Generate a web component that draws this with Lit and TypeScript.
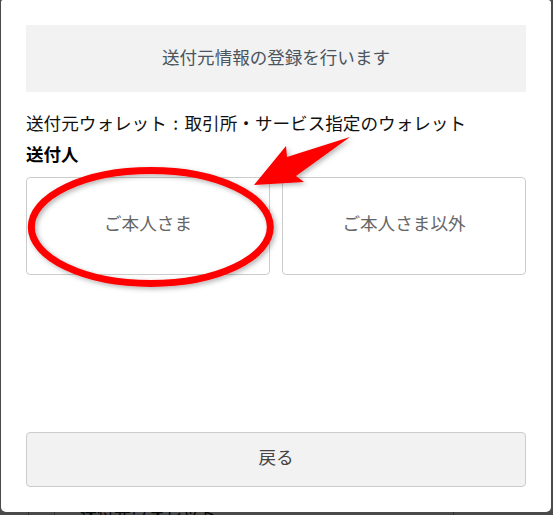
import { LitElement, html, css } from "lit";
import { customElement } from "lit/decorators.js";

@customElement("app-root")
export class AppRoot extends LitElement {
  static styles = css`
    :host { display: block; width: 553px; height: 515px; overflow: hidden; position: relative; background: #4a4a4a; font-family: "Noto Sans CJK JP", sans-serif; }
    .behind { position: absolute; left: 0; top: 500px; width: 553px; height: 30px; display: flex; color: #050505; font-size: 17px; line-height: 25px; }
    .cell-a { width: 29px; box-sizing: border-box; border-right: 1px solid #333; flex: none; }
    .cell-b { width: 26px; box-sizing: border-box; border-right: 1px solid #333; flex: none; }
    .cell-c { width: 399px; box-sizing: border-box; border-right: 1px solid #333; padding-left: 25px; flex: none; }
    .modal { position: relative; box-sizing: border-box; width: 550px; height: 512px; margin-left: 1px; background: #fff; border-radius: 2px 3px 5px 5px; padding: 25px; display: flex; flex-direction: column; }
    .banner { height: 67px; background: #f2f2f2; display: flex; align-items: center; justify-content: center; box-sizing: border-box; padding-bottom: 4px; font-size: 17.55px; color: #4a5560; flex: none; }
    .wallet { margin-top: 18px; font-size: 17.6px; word-spacing: 2.5px; line-height: 25px; color: #111; }
    .label { font-size: 17.5px; font-weight: 700; line-height: 22px; margin-top: 8px; color: #000; }
    .choices { display: flex; gap: 12px; margin-top: 12px; }
    .choice { flex: 1; height: 98px; box-sizing: border-box; border: 1px solid #ccc; border-radius: 4px; display: flex; align-items: center; justify-content: center; padding-bottom: 8px; font-size: 17.6px; color: #666; background: #fff; }
    .back { margin-top: auto; height: 55px; box-sizing: border-box; border: 1px solid #ccc; border-radius: 4px; background: #f2f2f2; display: flex; align-items: center; justify-content: center; padding-bottom: 6px; font-size: 17.6px; color: #444; }
    .marks { position: absolute; left: 0; top: 0; width: 553px; height: 515px; pointer-events: none; }
  `;
  render() {
    return html`
      <div class="behind">
        <div class="cell-a"></div>
        <div class="cell-b"></div>
        <div class="cell-c">送付元ウォレット</div>
      </div>
      <div class="modal">
        <div class="banner">送付元情報の登録を行います</div>
        <div class="wallet">送付元ウォレット : 取引所・サービス指定のウォレット</div>
        <div class="label">送付人</div>
        <div class="choices">
          <div class="choice">ご本人さま</div>
          <div class="choice">ご本人さま以外</div>
        </div>
        <div class="back">戻る</div>
      </div>
      <svg class="marks" viewBox="0 0 553 515">
        <defs>
          <filter id="sh" x="-10%" y="-10%" width="125%" height="125%">
            <feDropShadow dx="2" dy="2" stdDeviation="2.5" flood-color="#000" flood-opacity="0.3" />
          </filter>
        </defs>
        <g filter="url(#sh)">
          <ellipse cx="150.8" cy="227" rx="119.5" ry="56.5" fill="none" stroke="#f00" stroke-width="7" />
          <polygon points="254,185 286,146 287,157 350,137 296,176 304,182" fill="#f00" />
        </g>
      </svg>
    `;
  }
}
